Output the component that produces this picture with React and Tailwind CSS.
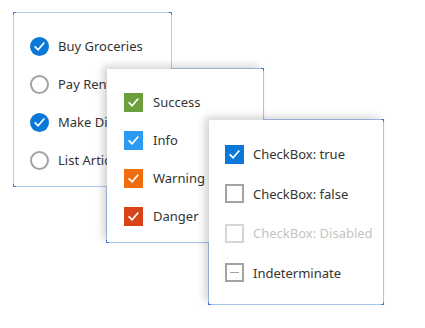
const panels = [
  { left: 13, top: 12, w: 159, h: 175 },
  { left: 106, top: 68, w: 158, h: 175 },
  { left: 208, top: 119, w: 176, h: 186 },
]

function Check({ color = 'white' }) {
  return (
    <svg viewBox="0 0 20 20" className="w-full h-full" fill="none" stroke={color} strokeWidth="1.8" strokeLinecap="square">
      <path d="M5.5 10.5l3 3 6-7" />
    </svg>
  )
}

function Radio({ checked, label }) {
  return (
    <div className="flex items-center gap-[9px] h-[22px]">
      {checked ? (
        <span className="w-[19px] h-[19px] rounded-full bg-[#0a78d7] flex items-center justify-center">
          <Check />
        </span>
      ) : (
        <span className="w-[19px] h-[19px] rounded-full border-2 border-[#a3a3a3]" />
      )}
      <span className="text-[13px] leading-[22px] text-[#333] whitespace-nowrap">{label}</span>
    </div>
  )
}

function ColorBox({ color, label }) {
  return (
    <div className="flex items-center gap-[10px] h-[22px]">
      <span className={`w-[19px] h-[19px] flex items-center justify-center ${color}`}>
        <Check />
      </span>
      <span className="text-[13px] leading-[22px] text-[#333] whitespace-nowrap">{label}</span>
    </div>
  )
}

function Box({ state, label }) {
  let box
  if (state === 'true') {
    box = (
      <span className="w-[19px] h-[19px] bg-[#0a78d7] flex items-center justify-center">
        <Check />
      </span>
    )
  } else if (state === 'disabled') {
    box = <span className="w-[19px] h-[19px] border-2 border-[#d6d6d6]" />
  } else if (state === 'indeterminate') {
    box = (
      <span className="w-[19px] h-[19px] border-2 border-[#a3a3a3] flex items-center justify-center">
        <span className="w-[9px] h-[1.5px] bg-[#a3a3a3]" />
      </span>
    )
  } else {
    box = <span className="w-[19px] h-[19px] border-2 border-[#a3a3a3]" />
  }
  return (
    <div className="flex items-center gap-[9px] h-[22px]">
      {box}
      <span className={`text-[13px] leading-[22px] whitespace-nowrap ${state === 'disabled' ? 'text-[#c4c4c4]' : 'text-[#333]'}`}>{label}</span>
    </div>
  )
}

function Frame({ p }) {
  return (
    <div className="absolute border border-[#aecaf0]" style={{ left: p.left, top: p.top, width: p.w, height: p.h }}>
      <span className="absolute -top-px -left-px w-[3px] h-[3px] bg-[#3f7fd8]" />
      <span className="absolute -top-px -right-px w-[3px] h-[3px] bg-[#3f7fd8]" />
      <span className="absolute -bottom-px -left-px w-[3px] h-[3px] bg-[#3f7fd8]" />
      <span className="absolute -bottom-px -right-px w-[3px] h-[3px] bg-[#3f7fd8]" />
    </div>
  )
}

function Card({ p, children, className }) {
  return (
    <div
      className={`absolute bg-white ${className}`}
      style={{ left: p.left + 1, top: p.top + 1, width: p.w - 2, height: p.h - 2 }}
    >
      {children}
    </div>
  )
}

export default function App() {
  return (
    <div className="relative w-[425px] h-[328px] bg-white overflow-hidden" style={{ fontFamily: '"Noto Sans", "Open Sans", sans-serif' }}>
      {panels.map((p, i) => (
        <Frame key={i} p={p} />
      ))}

      <Card p={panels[0]} className="pl-[16px] pt-[22px] flex flex-col gap-[16px]">
        <Radio checked label="Buy Groceries" />
        <Radio label="Pay Rent" />
        <Radio checked label="Make Dinner" />
        <Radio label="List Articles" />
      </Card>

      <Card p={panels[1]} className="pl-[17px] pt-[22px] flex flex-col gap-[16px] shadow-[-4px_-3px_8px_rgba(0,0,0,0.18)]">
        <ColorBox color="bg-[#6b9f3b]" label="Success" />
        <ColorBox color="bg-[#2b9af0]" label="Info" />
        <ColorBox color="bg-[#ef6d0c]" label="Warning" />
        <ColorBox color="bg-[#d8441a]" label="Danger" />
      </Card>

      <Card p={panels[2]} className="pl-[16px] pt-[23px] flex flex-col gap-[17.5px] shadow-[-4px_-3px_8px_rgba(0,0,0,0.18)]">
        <Box state="true" label="CheckBox: true" />
        <Box state="false" label="CheckBox: false" />
        <Box state="disabled" label="CheckBox: Disabled" />
        <Box state="indeterminate" label="Indeterminate" />
      </Card>
    </div>
  )
}
